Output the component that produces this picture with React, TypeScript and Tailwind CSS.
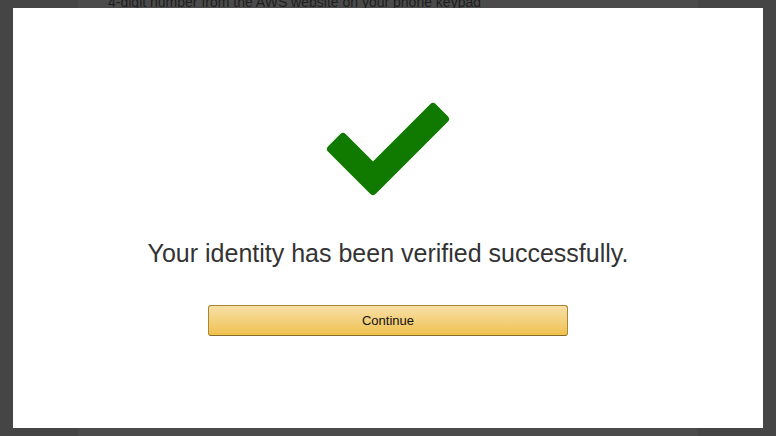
export default function App() {
  return (
    <div className="relative h-[436px] w-full overflow-hidden bg-[#444544] font-['Liberation_Sans',Arial,sans-serif]">
      {/* page behind the dimmed overlay */}
      <div className="flex h-full">
        <div className="w-[78px] shrink-0" />
        <div className="w-[620px] shrink-0 bg-[#4b4b4b] pl-[30px]">
          <p className="-mt-[7px] text-[14px] leading-[18px] text-[#1e1e1e]">
            4-digit number from the AWS website on your phone keypad
          </p>
        </div>
        <div className="flex-1" />
      </div>

      {/* modal */}
      <div className="absolute left-[13px] top-[8px] flex h-[420px] w-[750px] flex-col items-center bg-white">
        <svg width="130" height="100" viewBox="0 0 130 100" className="mt-[92px]">
          <polygon
            points="20,37 50,67 110,7 122,19 50,91 8,49"
            fill="#107a00"
            stroke="#107a00"
            strokeWidth="8"
            strokeLinejoin="round"
          />
        </svg>
        <h2 className="mt-[38px] text-[25px] leading-[30px] text-[#333333]">
          Your identity has been verified successfully.
        </h2>
        <button className="mt-[37px] h-[31px] w-[360px] rounded-[3px] border border-[#a88734] border-b-[#846a29] bg-gradient-to-b from-[#f7dfa5] to-[#f0c14b] text-[13px] text-[#111111]">
          Continue
        </button>
      </div>
    </div>
  )
}
